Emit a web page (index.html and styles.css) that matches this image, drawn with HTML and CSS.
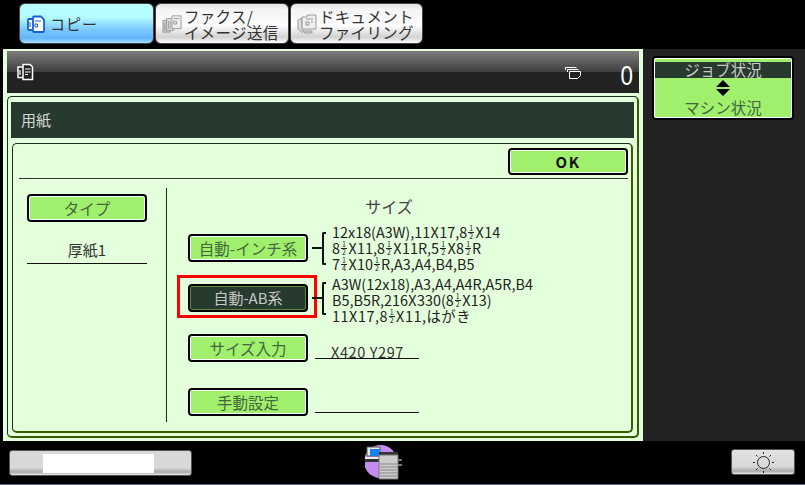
FILE: index.html
```html
<!DOCTYPE html>
<html lang="ja">
<head>
<meta charset="utf-8">
<title>用紙</title>
<link rel="stylesheet" href="styles.css">
</head>
<body>
<div class="screen">
  <nav class="tabs">
    <div class="tab active">
      <svg class="tab-icon" viewBox="0 0 18 18"><path d="M2 4h9a1 1 0 0 1 1 1v9a1 1 0 0 1-1 1H2a1 1 0 0 1-1-1V5a1 1 0 0 1 1-1z" fill="#fff" stroke="#1560d8" stroke-width="1.800"/><path d="M7 1.500h7l3 3V16a1 1 0 0 1-1 1H7a1 1 0 0 1-1-1V2.500a1 1 0 0 1 1-1z" fill="#fff" stroke="#1560d8" stroke-width="1.800"/><path d="M8 6h6M8 9h2.500v3H8zM3 7v5" fill="none" stroke="#1560d8"/></svg>
      <span class="tab-label big">コピー</span>
    </div>
    <div class="tab">
      <svg class="tab-icon" viewBox="0 0 22 20"><path d="M1 6h8v13H1z" fill="#c8c8c8" stroke="#999"/><path d="M5 4h8v13H5z" fill="#ddd" stroke="#999"/><path d="M11 1h10v14H11z" fill="#eee" stroke="#999"/><path d="M13 4h6M13 7h3v3h-3zM3 9v8M7 7v8M9 7v8" stroke="#999" fill="none"/></svg>
      <span class="tab-label">ファクス/<br>イメージ送信</span>
    </div>
    <div class="tab">
      <svg class="tab-icon" viewBox="0 0 20 20"><path d="M1 6l4-2v12l3 3h7v-2H6" fill="#ddd" stroke="#999"/><path d="M1 6v9l5 4" fill="#ddd" stroke="#999"/><path d="M5 3h5V1h9v14H5z" fill="#eee" stroke="#999"/><path d="M9 5h7M9 8h3v3H9zM14 8h2" fill="none" stroke="#999"/></svg>
      <span class="tab-label">ドキュメント<br>ファイリング</span>
    </div>
  </nav>

  <div class="middle">
    <main class="panel">
      <header class="status">
        <svg class="status-copy" viewBox="0 0 18 18"><path d="M2 4h8.500v10.500H2z" fill="#222" stroke="#fff" stroke-width="1.500"/><path d="M7 1.500h7l2.500 2.500v12.500H7z" fill="#222" stroke="#fff" stroke-width="1.500"/><path d="M9 6h5.500M9 9h5.500M9 11.500h3M4 7v5" fill="none" stroke="#fff" stroke-width="1.200"/></svg>
        <svg class="status-sets" viewBox="0 0 16 12"><path d="M.5 3V.5h11M2.500 5V2.500h11" fill="none" stroke="#fff"/><path d="M4.500 4.500h11v4l-3 3h-8z" fill="#222" stroke="#fff"/></svg>
        <span class="count">0</span>
      </header>

      <section class="sheet">
        <h1 class="sheet-title">用紙</h1>
        <div class="frame">
          <div class="frame-top">
            <button class="key ok">OK</button>
          </div>
          <div class="columns">
            <div class="type-col">
              <button class="key">タイプ</button>
              <div class="type-value">厚紙1</div>
            </div>
            <div class="size-col">
              <div class="size-head">サイズ</div>
              <div class="size-row row-inch">
                <button class="key">自動-インチ系</button>
                <span class="brace"></span>
                <div class="sizes">
                  <span class="line">12x18(A3W),11<i>X</i>17,8<b><u>1</u><u>2</u></b><i>X</i>14</span>
                  <span class="line">8<b><u>1</u><u>2</u></b><i>X</i>11,8<b><u>1</u><u>2</u></b><i>X</i>11R,5<b><u>1</u><u>2</u></b><i>X</i>8<b><u>1</u><u>2</u></b>R</span>
                  <span class="line">7<b><u>1</u><u>4</u></b><i>X</i>10<b><u>1</u><u>2</u></b>R,A3,A4,B4,B5</span>
                </div>
              </div>
              <div class="size-row row-ab">
                <span class="selection">
                  <button class="key selected">自動-AB系</button>
                </span>
                <span class="brace"></span>
                <div class="sizes">
                  <span class="line">A3W(12x18),A3,A4,A4R,A5R,B4</span>
                  <span class="line">B5,B5R,216<i>X</i>330(8<b><u>1</u><u>2</u></b><i>X</i>13)</span>
                  <span class="line wide">11<i>X</i>17,8<b><u>1</u><u>2</u></b><i>X</i>11,はがき</span>
                </div>
              </div>
              <div class="size-row row-input">
                <button class="key">サイズ入力</button>
                <div class="field">X420 Y297</div>
              </div>
              <div class="size-row row-manual">
                <button class="key">手動設定</button>
                <div class="field"></div>
              </div>
            </div>
          </div>
        </div>
      </section>
    </main>

    <aside class="side">
      <div class="job-toggle">
        <div class="job-on">ジョブ状況</div>
        <svg class="arrows" viewBox="0 0 14 16"><path d="M7 0l7 7H0zM0 9h14l-7 7z" fill="#000"/></svg>
        <div class="job-off">マシン状況</div>
      </div>
    </aside>
  </div>

  <footer class="bottom">
    <div class="meter"><span class="meter-white"></span></div>
    <svg class="machine" viewBox="0 0 38 36"><circle cx="15.500" cy="16.500" r="16.500" fill="#c48cf0"/><path d="M2 2h13v9H2z" fill="#e8e8e8" stroke="#555"/><path d="M5 4h10v7H5z" fill="#1a80f0"/><path d="M0 12h14v2H0z" fill="#eee"/><path d="M0 14h14v3H0z" fill="#333"/><path d="M14 7h19v3H14z" fill="#333"/><path d="M14 10h19v24H14z" fill="#ccc" stroke="#777"/><path d="M15 19h17M15 22h17M15 25h17M15 28h17M15 31h17" stroke="#888"/><path d="M33 14h4v2h-4zM33 19h4v2h-4z" fill="#777"/></svg>
    <div class="bright">
      <svg class="sun" viewBox="0 0 21 21"><circle cx="10.500" cy="10.500" r="6" fill="none" stroke="#222"/><path d="M10.500 0v2M10.500 19v2M0 10.500h2M19 10.500h2M3 3l1.500 1.500M18 3l-1.500 1.500M3 18l1.500-1.500M18 18l-1.500-1.500" stroke="#222"/></svg>
    </div>
  </footer>
</div>
</body>
</html>
```
FILE: styles.css
```css
* { box-sizing: border-box; }
html, body { margin: 0; padding: 0; background: #000; }
body { width: 805px; height: 485px; overflow: hidden; font-family: "Noto Sans CJK JP", "Liberation Sans", sans-serif; }
.screen { width: 805px; height: 485px; display: flex; flex-direction: column; background: #000; border-bottom: 1px solid #5a6a80; }

.tabs { height: 49px; padding: 3px 0 0 19px; display: flex; gap: 1px; flex: none; }
.tab { width: 134px; height: 41px; border: 1px solid #444; border-radius: 6px; display: flex; align-items: center; gap: 2px; padding-left: 6px; background: linear-gradient(#e4e4e4 0, #f4f4f4 15%, #fdfdfd 55%, #d2d2d2 85%, #fff 100%); color: #333; }
.tab.active { width: 135px; background: linear-gradient(#b8feff 0, #b2fbff 35%, #7cc8ff 65%, #64b4fa 88%, #a6dcff 100%); padding-left: 7px; gap: 5px; }
.tab:last-child { width: 133px; }
.tab-icon { width: 20px; height: 20px; flex: none; }
.active .tab-icon { width: 18px; height: 18px; }
.tab-label { font-size: 15.500px; line-height: 16px; letter-spacing: .3px; white-space: nowrap; }
.tab-label.big { font-size: 15px; letter-spacing: 1px; }

.middle { height: 392px; display: flex; flex: none; }
.panel { width: 640px; margin-left: 3px; background: #e4ffdc; padding: 2px 4px 4px; display: flex; flex-direction: column; }
.status { height: 42px; flex: none; display: flex; align-items: center; background: linear-gradient(#7c7c7c 0, #3e3e3e 50%, #222 50%, #222 100%); padding-left: 9px; color: #fff; }
.status-copy { width: 18px; height: 18px; margin-top: -1px; flex: none; }
.status-sets { width: 16px; height: 12px; margin-left: 531px; margin-top: 2px; flex: none; }
.count { margin-left: 38px; font-size: 28px; line-height: 30px; font-family: "Liberation Sans", sans-serif; margin-top: 7px; transform: scaleX(.8); }

.sheet { flex: 1; margin-top: 3px; border: 1px solid #1e2e1e; border-right: 2px solid #3a5a00; border-bottom: 2px solid #3a5a00; border-radius: 5px; padding: 5px 0 3px 3px; display: flex; flex-direction: column; }
.sheet-title { height: 36px; flex: none; margin: 0 0 5px 0; background: #263a2e; color: #d8d8d8; font-size: 15px; font-weight: 400; line-height: 36px; padding-left: 10px; width: 623px; }
.frame { width: 621px; height: 290px; margin-left: 1px; border: 1px solid #1e2e1e; border-right: 2px solid #3a5a00; border-bottom: 2px solid #3a5a00; border-radius: 5px; padding: 4px 3px 0 6px; }
.frame-top { display: flex; justify-content: flex-end; border-bottom: 1px solid #333; height: 31px; }

.key { width: 120px; height: 28px; padding: 0; border: 2px solid #000; border-radius: 4px; background: #a0f06e; box-shadow: inset 0 0 0 1px #fff; color: #44683c; font: 15.500px/22px "Noto Sans CJK JP", sans-serif; text-align: center; display: block; flex: none; }
.key.ok { height: 27px; color: #111; font-weight: 700; font-size: 15px; letter-spacing: 1.500px; line-height: 18px; }
.key.selected { background: #263a2e; box-shadow: inset 0 0 0 1px #5d8a3a; color: #c8c8c8; font-size: 15px; }

.columns { display: flex; height: 243px; padding: 9px 0 0 0; }
.type-col { width: 148px; padding: 6px 0 0 8px; border-right: 1px solid #222; height: 234px; flex: none; }
.type-value { width: 120px; height: 42px; border-bottom: 1px solid #111; color: #333; font-size: 15px; line-height: 56px; text-align: center; }
.size-col { padding-left: 21px; flex: 1; }
.size-head { width: 402px; text-align: center; color: #444; font-size: 16px; line-height: 22px; margin-top: 7px; height: 22px; margin-bottom: 17px; }
.size-row { display: flex; align-items: center; }
.row-inch { height: 28px; }
.row-ab { height: 28px; margin-top: 22px; }
.row-input { height: 27px; margin-top: 22px; }
.row-manual { height: 27px; margin-top: 27px; }
.selection { position: relative; display: block; flex: none; }
.selection::after { content: ""; position: absolute; left: -11px; right: -9px; top: -9px; bottom: -6px; border: 3px solid #f00; pointer-events: none; }
.brace { position: relative; width: 4px; height: 33px; flex: none; margin: 0 6px 0 14px; border: 2px solid #111; border-right: 0; border-radius: 2px 0 0 2px; }
.brace::before { content: ""; position: absolute; left: -12px; top: 13px; width: 10px; height: 2px; background: #111; }
.row-ab .brace { margin-top: 1px; }
.sizes { font-size: 14.400px; color: #222; white-space: nowrap; flex: none; }
.row-ab .sizes { margin-top: 4px; }
.line { display: block; height: 16px; line-height: 16px; }
.line.wide { letter-spacing: .5px; }
.sizes i { font-style: normal; display: inline-block; width: 9px; text-align: center; line-height: 16px; height: 16px; vertical-align: top; }
.sizes b { font-weight: 400; display: inline-block; width: 6px; height: 16px; margin: 0 1px; vertical-align: top; padding-top: 1px; }
.sizes u { display: block; text-decoration: none; font-size: 7px; line-height: 7px; height: 7px; text-align: center; }
.sizes u + u { border-top: 1px solid #222; height: 8px; }
.field { width: 104px; height: 24px; margin-left: 7px; border-bottom: 1px solid #111; color: #333; font-size: 14.500px; line-height: 34px; padding-left: 16px; white-space: nowrap; align-self: flex-end; margin-bottom: 2px; letter-spacing: .6px; }

.side { flex: 1; background: #222; padding: 7px 0 0 9px; }
.job-toggle { width: 142px; height: 64px; border: 2px solid #000; outline: 1px solid #fff; outline-offset: -3px; border-radius: 4px; background: #a0f06e; padding: 4px 1px 0; display: flex; flex-direction: column; align-items: center; }
.job-on { width: 100%; height: 16px; flex: none; background: #263a2e; color: #c8c8c8; text-align: center; font-size: 15.500px; line-height: 14px; }
.arrows { width: 14px; height: 16px; flex: none; margin-top: 2px; }
.job-off { color: #44683c; font-size: 15.500px; line-height: 20px; flex: none; margin-top: 1px; }

.bottom { flex: 1; display: flex; align-items: flex-start; padding: 9px 0 0 9px; }
.meter { width: 183px; height: 26px; border: 1px solid #555; border-radius: 3px; background: linear-gradient(#d8d8d8 0, #d8d8d8 70%, #aaa 88%, #e8e8e8 100%); padding: 3px 0 0 33px; flex: none; }
.meter-white { display: block; width: 111px; height: 19px; background: #fff; }
.machine { width: 38px; height: 36px; margin: -5px 0 0 173px; flex: none; }
.bright { width: 64px; height: 26px; margin: -1px 0 0 328px; border: 1px solid #555; border-radius: 3px; background: linear-gradient(#e2e2e2 0, #d8d8d8 70%, #aaa 88%, #e8e8e8 100%); display: flex; align-items: center; justify-content: center; flex: none; }
.sun { width: 21px; height: 21px; flex: none; }
```
